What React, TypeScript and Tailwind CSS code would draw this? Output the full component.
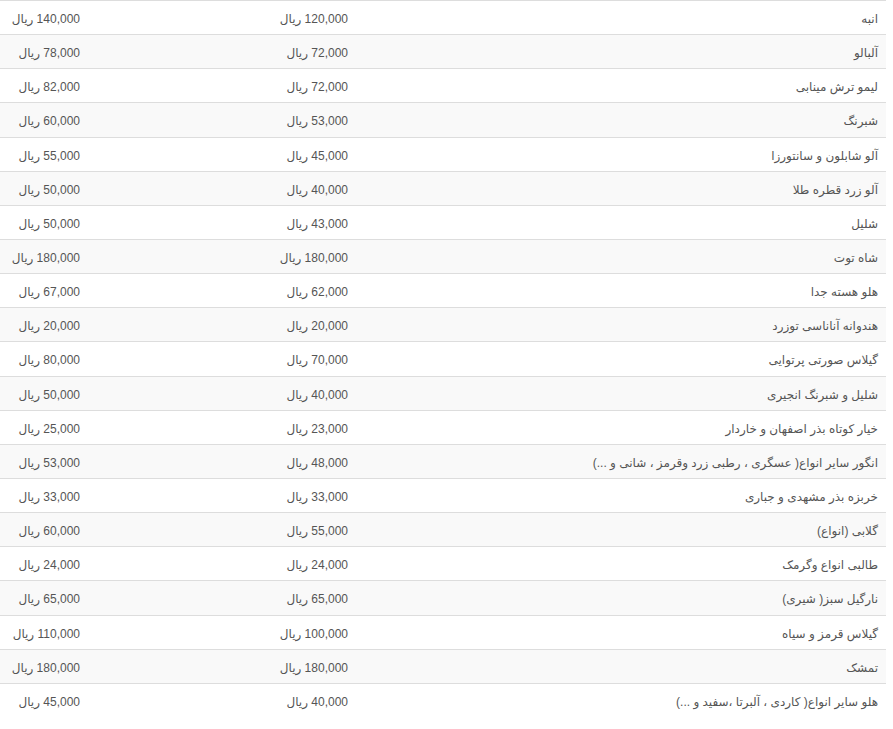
const rows: [string, string, string][] = [
  ["انبه", "120,000", "140,000"],
  ["آلبالو", "72,000", "78,000"],
  ["لیمو ترش مینابی", "72,000", "82,000"],
  ["شبرنگ", "53,000", "60,000"],
  ["آلو شابلون و سانتورزا", "45,000", "55,000"],
  ["آلو زرد قطره طلا", "40,000", "50,000"],
  ["شلیل", "43,000", "50,000"],
  ["شاه توت", "180,000", "180,000"],
  ["هلو هسته جدا", "62,000", "67,000"],
  ["هندوانه آناناسی توزرد", "20,000", "20,000"],
  ["گیلاس صورتی پرتوایی", "70,000", "80,000"],
  ["شلیل و شبرنگ انجیری", "40,000", "50,000"],
  ["خیار کوتاه بذر اصفهان و خاردار", "23,000", "25,000"],
  ["انگور سایر انواع( عسگری ، رطبی زرد وقرمز ، شانی و ...)", "48,000", "53,000"],
  ["خربزه بذر مشهدی و جباری", "33,000", "33,000"],
  ["گلابی (انواع)", "55,000", "60,000"],
  ["طالبی انواع وگرمک", "24,000", "24,000"],
  ["نارگیل سبز( شیری)", "65,000", "65,000"],
  ["گیلاس قرمز و سیاه", "100,000", "110,000"],
  ["تمشک", "180,000", "180,000"],
  ["هلو سایر انواع( کاردی ، آلبرتا ،سفید و ...)", "40,000", "45,000"],
];

export default function App() {
  return (
    <div className="bg-white min-h-screen font-['Liberation_Sans','DejaVu_Sans',sans-serif] text-[12px] leading-[1.42857] text-[#555]">
      <table dir="rtl" className="w-[886px] border-collapse table-fixed">
        <tbody>
          {rows.map(([name, min, max], i) => (
            <tr key={i} className={i % 2 === 1 ? "bg-[#f9f9f9]" : "bg-white"}>
              <td className="w-[530px] border-t border-[#ddd] px-2 pt-[10px] pb-[6px] text-right">{name}</td>
              <td className="w-[268px] border-t border-[#ddd] px-2 pt-[10px] pb-[6px] text-right">{min} ریال</td>
              <td className="w-[88px] border-t border-[#ddd] px-2 pt-[10px] pb-[6px] text-right">{max} ریال</td>
            </tr>
          ))}
        </tbody>
      </table>
    </div>
  );
}
